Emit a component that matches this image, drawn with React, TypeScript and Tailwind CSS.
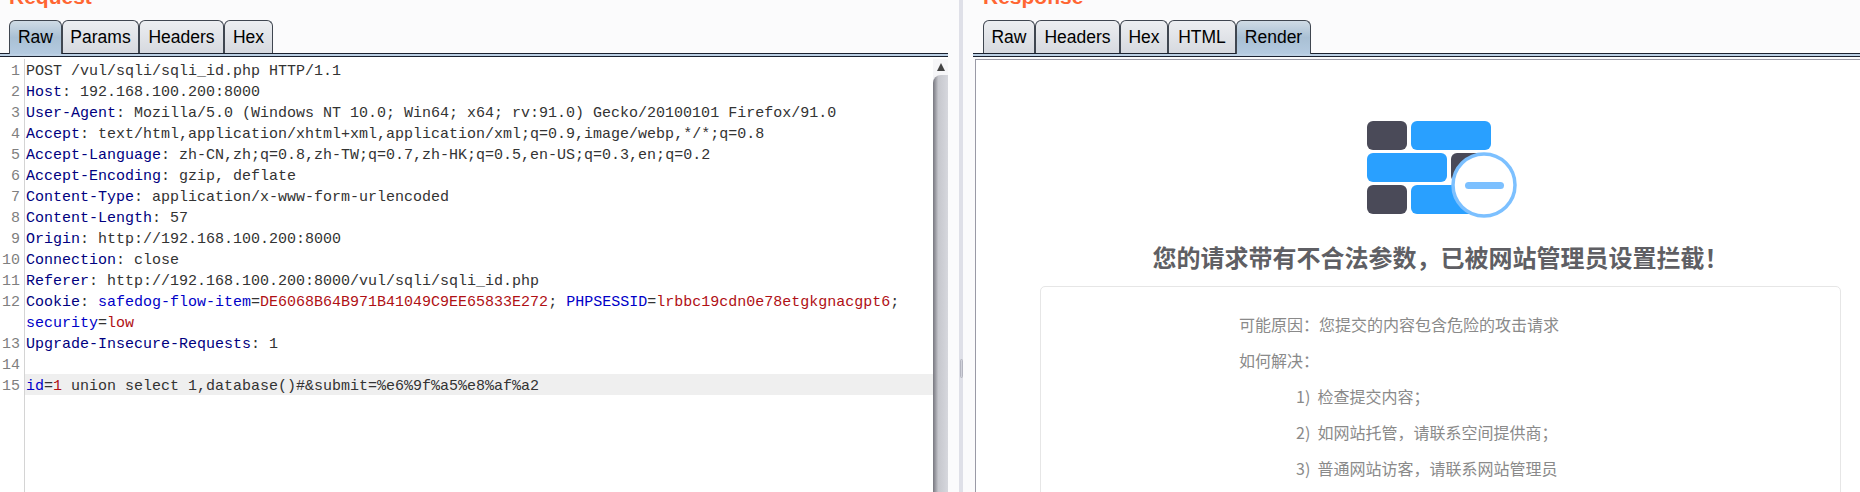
import React from 'react';

const CJK = 'font-["Noto_Sans_CJK_SC","Noto_Sans",sans-serif]';

const Tab = ({ label, width, active }: { label: string; width: string; active?: boolean }) => (
  <div
    className={`${width} flex items-center justify-center border border-b-0 border-[#3f4650] rounded-t-[6px] text-[17.5px] text-black ${
      active
        ? 'h-[34px] -mb-px pb-px relative bg-gradient-to-b from-[#cfdbe5] via-[#a9c0d4] to-[#b4cae0]'
        : 'h-[33px] bg-gradient-to-b from-[#eceef1] to-[#d6d9df]'
    }`}
  >
    {label}
  </div>
);

const Rule = () => <div className="h-[4px] border-y border-[#1b2230] bg-[#bcd0e4]" />;

const N = ({ c }: { c: string }) => <span className="text-[#000080]">{c}</span>;
const K = ({ c }: { c: string }) => <span className="text-[#0000c8]">{c}</span>;
const V = ({ c }: { c: string }) => <span className="text-[#b01015]">{c}</span>;

const Line = ({ children, hl }: { children?: React.ReactNode; hl?: boolean }) => (
  <div className={`h-[21px] whitespace-pre pl-[1px] pt-[2px] ${hl ? 'bg-[#efefef]' : ''}`}>{children}</div>
);

const Header = ({ name, value }: { name: string; value: string }) => (
  <Line>
    <N c={name} />: {value}
  </Line>
);

const gutter = ['1', '2', '3', '4', '5', '6', '7', '8', '9', '10', '11', '12', '', '13', '14', '15'];

const Scrollbar = () => (
  <div className="w-[15px] flex flex-col bg-[#f4f4f6]">
    <div className="h-[16px] flex items-center justify-center bg-[#f6f6f8]">
      <svg width="8" height="8" viewBox="0 0 8 8">
        <polygon points="4,0 8,8 0,8" fill="#444" />
      </svg>
    </div>
    <div className="flex-1 rounded-tl-[8px] bg-gradient-to-r from-[#77777f] via-[#c6c7cd] via-35% to-[#d6d7dd]" />
  </div>
);

const BlockIcon = () => (
  <svg width="152" height="110" viewBox="-2 0 152 110">
    <rect x="0" y="0" width="40" height="29" rx="6" fill="#4a4a58" />
    <rect x="44" y="0" width="80" height="29" rx="6" fill="#29a0ff" />
    <rect x="0" y="32" width="80" height="29" rx="6" fill="#29a0ff" />
    <rect x="84" y="32" width="40" height="29" rx="6" fill="#4a4a58" />
    <rect x="0" y="64" width="40" height="29" rx="6" fill="#4a4a58" />
    <rect x="44" y="64" width="80" height="29" rx="6" fill="#29a0ff" />
    <circle cx="117" cy="64" r="31" fill="#fff" stroke="#7cc0ff" strokeWidth="3.5" />
    <rect x="98" y="61" width="39" height="7" rx="3.5" fill="#7cc0ff" />
  </svg>
);

export default function App() {
  return (
    <div className='h-[492px] w-[1860px] overflow-hidden flex bg-[#fbfbfc] font-["Liberation_Sans",Arial,sans-serif]'>
      {/* request pane */}
      <div className="w-[959px] flex flex-col shrink-0">
        <div className="h-[20px] overflow-hidden pl-[9px]">
          <div className="-mt-[15px] text-[21px] leading-[24px] font-bold text-[#ff6633]">Request</div>
        </div>
        <div className="flex pl-[9px]">
          <Tab label="Raw" width="w-[53px]" active />
          <Tab label="Params" width="w-[77px]" />
          <Tab label="Headers" width="w-[85px]" />
          <Tab label="Hex" width="w-[49px]" />
        </div>
        <div className="w-[948px]">
          <Rule />
        </div>
        <div className="w-[948px] flex-1 flex bg-white pt-[2px]">
          <div className='w-[25px] shrink-0 border-r border-[#d4d4d4] text-right pr-[4px] text-[15px] leading-[21px] text-[#7f7f7f] font-["Liberation_Mono",monospace]'>
            {gutter.map((g, i) => (
              <div key={i} className="h-[21px] pt-[2px]">
                {g}
              </div>
            ))}
          </div>
          <div className='flex-1 text-[15px] leading-[21px] text-[#333333] font-["Liberation_Mono",monospace]'>
            <Line>POST /vul/sqli/sqli_id.php HTTP/1.1</Line>
            <Header name="Host" value="192.168.100.200:8000" />
            <Header name="User-Agent" value="Mozilla/5.0 (Windows NT 10.0; Win64; x64; rv:91.0) Gecko/20100101 Firefox/91.0" />
            <Header name="Accept" value="text/html,application/xhtml+xml,application/xml;q=0.9,image/webp,*/*;q=0.8" />
            <Header name="Accept-Language" value="zh-CN,zh;q=0.8,zh-TW;q=0.7,zh-HK;q=0.5,en-US;q=0.3,en;q=0.2" />
            <Header name="Accept-Encoding" value="gzip, deflate" />
            <Header name="Content-Type" value="application/x-www-form-urlencoded" />
            <Header name="Content-Length" value="57" />
            <Header name="Origin" value="http://192.168.100.200:8000" />
            <Header name="Connection" value="close" />
            <Header name="Referer" value="http://192.168.100.200:8000/vul/sqli/sqli_id.php" />
            <Line>
              <N c="Cookie" />: <K c="safedog-flow-item" />=<V c="DE6068B64B971B41049C9EE65833E272" />; <K c="PHPSESSID" />=
              <V c="lrbbc19cdn0e78etgkgnacgpt6" />;
            </Line>
            <Line>
              <K c="security" />=<V c="low" />
            </Line>
            <Header name="Upgrade-Insecure-Requests" value="1" />
            <Line />
            <Line hl>
              <K c="id" />=<V c="1" /> union select 1,database()#&amp;submit=%e6%9f%a5%e8%af%a2
            </Line>
          </div>
          <Scrollbar />
        </div>
      </div>

      {/* splitter */}
      <div className="w-[4px] shrink-0 bg-[#dfe0e8] flex items-center justify-center">
        <div className="w-[3px] h-[19px] rounded-[2px] border border-[#b4b5c0] bg-[#d0d1da] mt-[244px]" />
      </div>

      {/* response pane */}
      <div className="flex-1 flex flex-col pl-[10px]">
        <div className="h-[20px] overflow-hidden pl-[10px]">
          <div className="-mt-[15px] text-[21px] leading-[24px] font-bold text-[#ff6633]">Response</div>
        </div>
        <div className="flex pl-[10px]">
          <Tab label="Raw" width="w-[52px]" />
          <Tab label="Headers" width="w-[85px]" />
          <Tab label="Hex" width="w-[48px]" />
          <Tab label="HTML" width="w-[68px]" />
          <Tab label="Render" width="w-[75px]" active />
        </div>
        <Rule />
        <div className="flex-1 min-h-0 mt-[2px] ml-[2px] border-t border-l border-[#9a9aa6] bg-white pl-[45px] flex flex-col items-center overflow-hidden">
          <div className="mt-[61px] h-[110px] shrink-0">
            <BlockIcon />
          </div>
          <div className={`${CJK} mt-[8px] text-[24px] leading-[36px] font-bold text-[#5f5f64]`}>
            {'您的请求带有不合法参数\uFF0C已被网站管理员设置拦截\uFF01'}
          </div>
          <div className={`${CJK} mt-[11px] w-[801px] h-[300px] shrink-0 border border-[#e6e6e6] rounded-[5px] pt-[19px] pl-[198px] text-[16px] leading-[36px] text-[#8a8a8a]`}>
            <div>{'可能原因\uFF1A您提交的内容包含危险的攻击请求'}</div>
            <div>{'如何解决\uFF1A'}</div>
            <div className="pl-[57px]">{'1)\u00A0\u00A0检查提交内容\uFF1B'}</div>
            <div className="pl-[57px]">{'2)\u00A0\u00A0如网站托管\uFF0C请联系空间提供商\uFF1B'}</div>
            <div className="pl-[57px]">{'3)\u00A0\u00A0普通网站访客\uFF0C请联系网站管理员'}</div>
          </div>
        </div>
      </div>
    </div>
  );
}
